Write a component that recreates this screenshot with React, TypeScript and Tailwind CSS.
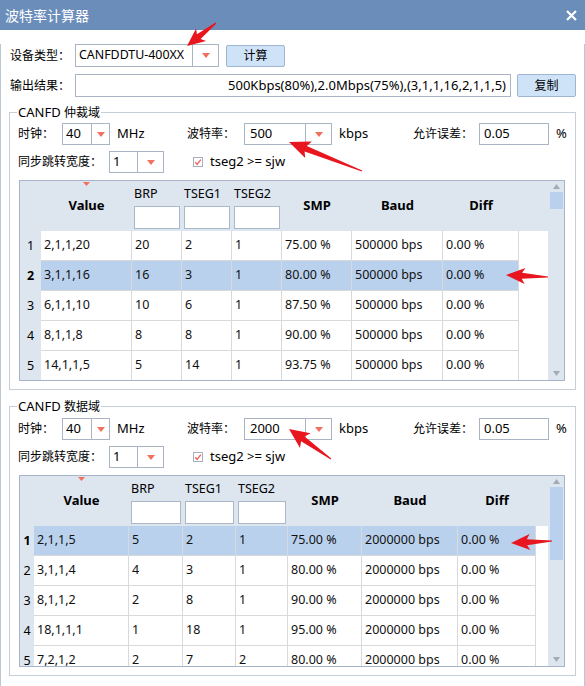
import React from 'react'

const TABLE_A = {
  rowHdr: 'w-[21px]',
  cols: ['w-[91px]', 'w-[50px]', 'w-[50px]', 'w-[50px]', 'w-[70px]', 'w-[91px]', 'w-[76px]'],
  height: 'h-[201px]',
  thumb: 'top-[11px] h-[17px]',
  selected: 1,
  rows: [
    ['2,1,1,20', '20', '2', '1', '75.00 %', '500000 bps', '0.00 %'],
    ['3,1,1,16', '16', '3', '1', '80.00 %', '500000 bps', '0.00 %'],
    ['6,1,1,10', '10', '6', '1', '87.50 %', '500000 bps', '0.00 %'],
    ['8,1,1,8', '8', '8', '1', '90.00 %', '500000 bps', '0.00 %'],
    ['14,1,1,5', '5', '14', '1', '93.75 %', '500000 bps', '0.00 %'],
  ],
}

const TABLE_B = {
  rowHdr: 'w-[14px]',
  cols: ['w-[95px]', 'w-[54px]', 'w-[53px]', 'w-[52px]', 'w-[74px]', 'w-[96px]', 'w-[78px]'],
  height: 'h-[192px]',
  thumb: 'top-[11px] h-[73px]',
  selected: 0,
  rows: [
    ['2,1,1,5', '5', '2', '1', '75.00 %', '2000000 bps', '0.00 %'],
    ['3,1,1,4', '4', '3', '1', '80.00 %', '2000000 bps', '0.00 %'],
    ['8,1,1,2', '2', '8', '1', '90.00 %', '2000000 bps', '0.00 %'],
    ['18,1,1,1', '1', '18', '1', '95.00 %', '2000000 bps', '0.00 %'],
    ['7,2,1,2', '2', '7', '2', '80.00 %', '2000000 bps', '0.00 %'],
  ],
}

const HEADERS = ['Value', 'BRP', 'TSEG1', 'TSEG2', 'SMP', 'Baud', 'Diff']

function Tri() {
  return (
    <svg width="8" height="5" viewBox="0 0 8 5">
      <path d="M0 0H8L4 5Z" fill="#f2705f" />
    </svg>
  )
}

function Combo({ w, dw, pad, value }: { w: string; dw: string; pad: string; value: string }) {
  return (
    <div className={`flex h-[22px] border border-[#a9b5c5] bg-white ${w}`}>
      <span className={`flex-1 flex items-center text-[13px] ${pad}`}>{value}</span>
      <div className={`flex items-center justify-center border-l border-[#a9b5c5] ${dw}`}>
        <Tri />
      </div>
    </div>
  )
}

function Check() {
  return (
    <svg width="10" height="10" viewBox="0 0 10 10">
      <rect x="0.5" y="0.5" width="9" height="9" fill="#fff" stroke="#a7afba" />
      <path d="M2.2 5.2L4.1 7.3L7.9 2.6" fill="none" stroke="#ee6a62" strokeWidth="1.4" />
    </svg>
  )
}

function Arrow({ x1, y1, x2, y2, h = 17, w = 9 }: { x1: number; y1: number; x2: number; y2: number; h?: number; w?: number }) {
  const len = Math.hypot(x2 - x1, y2 - y1)
  const ux = (x2 - x1) / len
  const uy = (y2 - y1) / len
  const nx = -uy
  const ny = ux
  const bx = x2 - ux * h
  const by = y2 - uy * h
  const p = (x: number, y: number) => `${x.toFixed(1)},${y.toFixed(1)}`
  const pts = [
    p(x1 + nx * 0.6, y1 + ny * 0.6),
    p(bx + nx * 3, by + ny * 3),
    p(bx - ux * 3 + nx * w, by - uy * 3 + ny * w),
    p(x2, y2),
    p(bx - ux * 3 - nx * w, by - uy * 3 - ny * w),
    p(bx - nx * 3, by - ny * 3),
    p(x1 - nx * 0.6, y1 - ny * 0.6),
  ]
  return <polygon points={pts.join(' ')} fill="#e8161e" />
}

function Grid({ t }: { t: typeof TABLE_A }) {
  return (
    <div className={`ml-px mt-[7px] flex w-[546px] border border-[#a6b5ca] overflow-hidden ${t.height}`}>
      <div className="flex w-[528px] flex-col bg-white">
        {/* header */}
        <div className="flex h-[50px] shrink-0 bg-[#dde5ef]">
          <div className={t.rowHdr} />
          {HEADERS.map((h, i) => {
            if (i >= 1 && i <= 3) {
              return (
                <div key={h} className={`flex flex-col px-[2px] pt-[4px] ${t.cols[i]}`}>
                  <span className="h-[17px] leading-[17px] text-[12.5px]">{h}</span>
                  <div className="mt-[4px] h-[23px] border border-[#a9b7c8] bg-white" />
                </div>
              )
            }
            return (
              <div key={h} className={`relative flex items-center justify-center text-[13px] font-bold ${t.cols[i]}`}>
                {i === 0 && (
                  <div className="absolute left-0 right-0 top-[1px] flex justify-center">
                    <svg width="7" height="4" viewBox="0 0 7 4">
                      <path d="M0 0H7L3.5 4Z" fill="#f2705f" />
                    </svg>
                  </div>
                )}
                {h}
              </div>
            )
          })}
          <div className="flex-1" />
        </div>
        {/* rows */}
        <div className="flex flex-1 flex-col">
          {t.rows.map((r, ri) => {
            const sel = ri === t.selected
            return (
              <div key={ri} className="flex h-[30px] shrink-0">
                <div className={`flex items-center justify-center bg-[#dde5ef] text-[12.5px] ${t.rowHdr} ${sel ? 'font-bold' : ''}`}>
                  {ri + 1}
                </div>
                {r.map((c, ci) => (
                  <div
                    key={ci}
                    className={`flex items-center border-r border-b border-[#d7d9dc] pl-[3px] text-[12.5px] text-[#111] ${t.cols[ci]} ${sel ? 'bg-[#bad1ee]' : 'bg-white'}`}
                  >
                    {c}
                  </div>
                ))}
                <div className="flex-1 bg-white" />
              </div>
            )
          })}
        </div>
      </div>
      {/* scrollbar */}
      <div className="relative w-[16px] bg-[#dde5ef]">
        <svg className="absolute left-[5px] top-[3px]" width="7" height="5" viewBox="0 0 7 5">
          <path d="M0 5H7L3.5 0Z" fill="#a3abb6" />
        </svg>
        <div className={`absolute left-[2px] right-[1px] bg-[#b9d0ee] ${t.thumb}`} />
        <svg className="absolute bottom-[4px] left-[5px]" width="7" height="5" viewBox="0 0 7 5">
          <path d="M0 0H7L3.5 5Z" fill="#a3abb6" />
        </svg>
      </div>
    </div>
  )
}

function Group({ title, pt, t, baud, className }: { title: string[]; pt: string; t: typeof TABLE_A; baud: string; className: string }) {
  return (
    <div className={`relative mx-[8px] border border-[#c6ced9] pl-[8px] pb-[8px] ${pt} ${className}`}>
      <span className="absolute left-[7px] top-[-9px] bg-white px-px leading-[16px] text-[13px]">
        {title[0]}
        <span className="text-[12px]">{title[1]}</span>
      </span>
      <div className="flex h-[22px] items-center">
        <span className="w-[44px] text-[12px]">时钟：</span>
        <Combo w="w-[48px]" dw="w-[18px]" pad="pl-[3px]" value="40" />
        <span className="ml-[7px] w-[70px] text-[13px]">MHz</span>
        <span className="w-[57px] text-[12px]">波特率：</span>
        <Combo w="w-[88px]" dw="w-[26px]" pad="pl-[5px]" value={baud} />
        <span className="ml-[7px] w-[74px] text-[13px]">kbps</span>
        <span className="w-[66px] text-[12px]">允许误差：</span>
        <div className="flex h-[22px] w-[70px] items-center border border-[#a9b5c5] pl-[4px] text-[13px]">0.05</div>
        <span className="ml-[7px] text-[13px]">%</span>
      </div>
      <div className="mt-[6px] flex h-[22px] items-center">
        <span className="w-[91px] text-[12px]">同步跳转宽度：</span>
        <Combo w="w-[55px]" dw="w-[26px]" pad="pl-[3px]" value="1" />
        <div className="ml-[29px] flex">
          <Check />
        </div>
        <span className="ml-[7px] text-[13px]">tseg2 &gt;= sjw</span>
      </div>
      <Grid t={t} />
    </div>
  )
}

export default function App() {
  return (
    <div className="relative h-[686px] w-[585px] bg-white font-['Noto_Sans','Noto_Sans_CJK_SC',sans-serif] text-black">
      <div className="flex h-[30px] items-center bg-[#6b8dba] pl-[5px] text-[14px] text-white">
        <span>波特率计算器</span>
        <svg className="ml-auto mr-[8px]" width="11" height="11" viewBox="0 0 11 11">
          <path d="M1 1L10 10M10 1L1 10" stroke="#fff" strokeWidth="2.2" />
        </svg>
      </div>
      <div className="h-[656px] border-x border-b border-[#bcc7d6]">
        <div className="mt-[14px] flex h-[23px] items-center pl-[9px]">
          <span className="w-[65px] text-[12px]">设备类型：</span>
          <div className="flex h-[23px] w-[144px] border border-[#a9b5c5] bg-white">
            <span className="flex flex-1 items-center pl-[3px] text-[12.4px]">CANFDDTU-400XX</span>
            <div className="flex w-[26px] items-center justify-center border-l border-[#a9b5c5]">
              <Tri />
            </div>
          </div>
          <button className="ml-[7px] h-[22px] w-[59px] rounded-[2px] border border-[#9fb6d2] bg-[#cfe3f8] text-[12px]">
            计算
          </button>
        </div>
        <div className="mt-[7px] flex h-[23px] items-center pl-[9px]">
          <span className="w-[65px] text-[12px]">输出结果：</span>
          <div className="flex h-[23px] w-[436px] items-center justify-end border border-[#a9b5c5] pr-[4px] text-[13px]">
            500Kbps(80%),2.0Mbps(75%),(3,1,1,16,2,1,1,5)
          </div>
          <button className="ml-[6px] h-[23px] w-[59px] rounded-[2px] border border-[#9fb6d2] bg-[#cfe3f8] text-[12px]">
            复制
          </button>
        </div>
        <Group title={['CANFD ', '仲裁域']} pt="pt-[10px]" t={TABLE_A} baud="500" className="mt-[15px]" />
        <Group title={['CANFD ', '数据域']} pt="pt-[11px]" t={TABLE_B} baud="2000" className="mt-[16px]" />
      </div>
      <svg className="pointer-events-none absolute left-0 top-0" width="585" height="686">
        <Arrow x1={216} y1={23} x2={187} y2={46} h={15} w={8} />
        <Arrow x1={362} y1={171} x2={289} y2={142} h={18} w={9} />
        <Arrow x1={548} y1={277} x2={506} y2={275} h={16} w={8} />
        <Arrow x1={331} y1={459} x2={289} y2={429} h={17} w={9} />
        <Arrow x1={552} y1={541} x2={511} y2={543} h={16} w={8} />
      </svg>
    </div>
  )
}
